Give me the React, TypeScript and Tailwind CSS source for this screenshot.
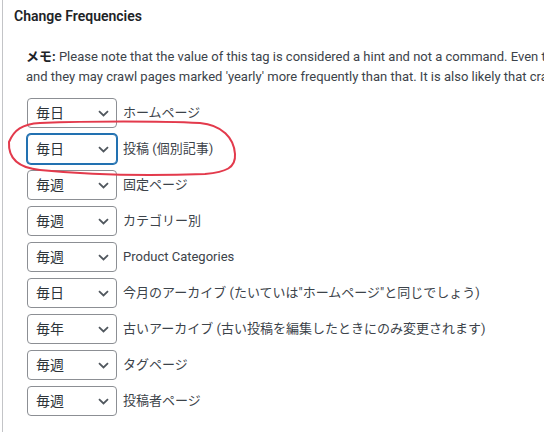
const rows = [
  { value: "daily", label: "ホームページ", focused: false },
  { value: "daily", label: "投稿 (個別記事)", focused: true },
  { value: "weekly", label: "固定ページ", focused: false },
  { value: "weekly", label: "カテゴリー別", focused: false },
  { value: "weekly", label: "Product Categories", focused: false },
  { value: "daily", label: "今月のアーカイブ (たいていは\"ホームページ\"と同じでしょう)", focused: false },
  { value: "yearly", label: "古いアーカイブ (古い投稿を編集したときにのみ変更されます)", focused: false },
  { value: "weekly", label: "タグページ", focused: false },
  { value: "weekly", label: "投稿者ページ", focused: false },
];

const options = [
  { value: "always", text: "常時" },
  { value: "hourly", text: "毎時" },
  { value: "daily", text: "毎日" },
  { value: "weekly", text: "毎週" },
  { value: "monthly", text: "毎月" },
  { value: "yearly", text: "毎年" },
  { value: "never", text: "更新なし" },
];

const FreqSelect = ({ value, focused }: { value: string; focused: boolean }) => (
  <div className="relative w-[90px] h-[30px] shrink-0">
    <select
      defaultValue={value}
      className={
        "appearance-none w-full h-full bg-white rounded-[4px] border pl-2 pr-6 text-[14px] text-[#2c3338] outline-none " +
        (focused
          ? "border-[#2271b1] shadow-[0_0_0_1px_#2271b1]"
          : "border-[#8c8f94]")
      }
    >
      {options.map((o) => (
        <option key={o.value} value={o.value}>
          {o.text}
        </option>
      ))}
    </select>
    <svg
      className="absolute right-[8px] top-[12px] pointer-events-none"
      width="11"
      height="7"
      viewBox="0 0 11 7"
    >
      <polyline
        points="1,1.2 5.5,5.5 10,1.2"
        fill="none"
        stroke="#50575e"
        strokeWidth="1.8"
      />
    </svg>
  </div>
);

export default function App() {
  return (
    <div
      className="relative w-[544px] h-[432px] overflow-hidden bg-white pl-[2px] text-[#3c434a]"
      style={{ fontFamily: 'Roboto, "Noto Sans CJK JP", sans-serif' }}
    >
      <div className="h-full border-l border-[#c3c4c7] pl-[11px]">
        <h2 className="pt-[6px] text-[14px] font-semibold leading-[20px] text-[#1d2327]">
          Change Frequencies
        </h2>
        <div className="pl-[12px] pt-[21px]">
          <p className="text-[13px] leading-[20px] whitespace-nowrap">
            <b className="font-bold text-[#1d2327]">メモ:</b> Please note that the value of this tag is considered a hint and not a command. Even though search engine crawlers consider this information when making decisions,
            <br />
            and they may crawl pages marked 'yearly' more frequently than that. It is also likely that crawlers will periodically crawl pages marked 'never'.
          </p>
          <ul className="mt-[11px] pl-[1px] flex flex-col gap-[6px]">
            {rows.map((r, i) => (
              <li key={i} className="flex items-center gap-[6px]">
                <FreqSelect value={r.value} focused={r.focused} />
                <span className="text-[13px] whitespace-nowrap">{r.label}</span>
              </li>
            ))}
          </ul>
        </div>
      </div>
      <svg
        className="absolute left-0 top-0 pointer-events-none"
        width="544"
        height="432"
        viewBox="0 0 544 432"
      >
        <path
          d="M9 142 C14 130 22 124 40 123 C90 121 160 121 200 123 C222 125 234 138 235 154 C236 168 226 172 205 174 C150 176 90 175 40 170 C20 168 8 160 9 142 Z"
          fill="none"
          stroke="#e33a4c"
          strokeWidth="2"
          strokeLinecap="round"
        />
      </svg>
    </div>
  );
}
